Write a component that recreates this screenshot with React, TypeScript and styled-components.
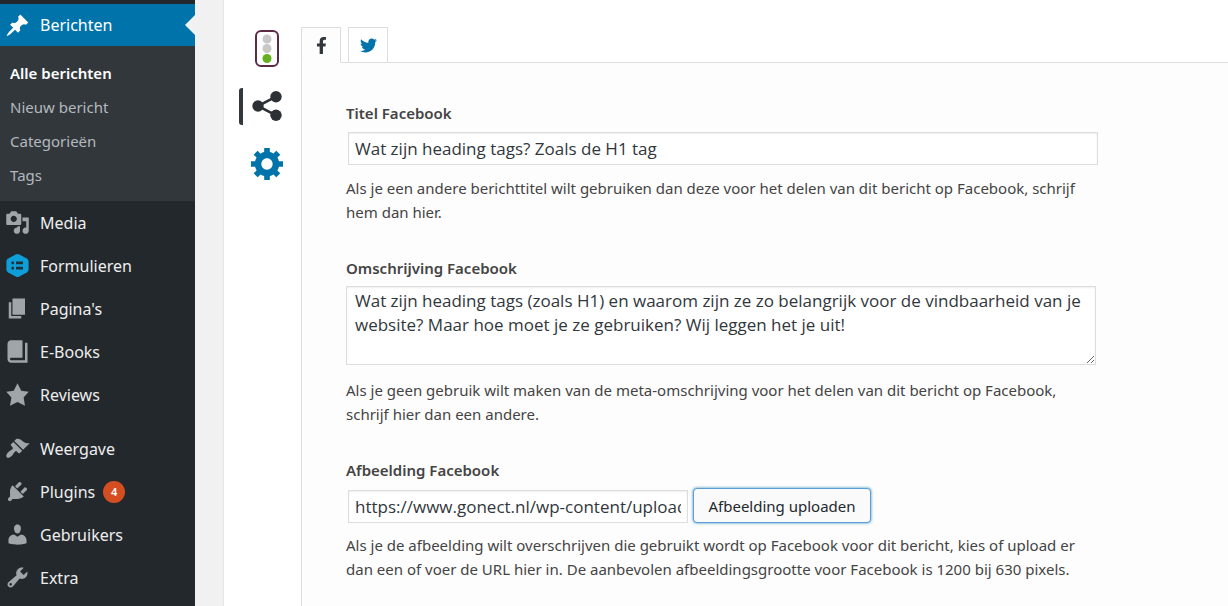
import React from "react";
import styled, { createGlobalStyle } from "styled-components";
import { FaFacebookF, FaTwitter } from "react-icons/fa";

const GlobalStyle = createGlobalStyle`
  *, *::before, *::after { box-sizing: border-box; }
  body {
    margin: 0;
    background: #f1f1f1;
    color: #444;
    font-family: "Noto Sans", "Open Sans", sans-serif;
    font-size: 15px;
    line-height: 24px;
  }
  ul { list-style: none; margin: 0; padding: 0; }
  a { color: inherit; text-decoration: none; }
`;

const Page = styled.div`
  display: flex;
  min-height: 100vh;
`;

const Sidebar = styled.nav`
  flex: 0 0 195px;
  padding-top: 4px;
  background: #23282d;
  color: #eee;
`;

const MenuLink = styled.a<{ $current?: boolean }>`
  position: relative;
  display: flex;
  align-items: center;
  gap: 10px;
  height: ${(p) => (p.$current ? 42 : 43)}px;
  padding-left: 5px;
  font-size: 16px;
  color: ${(p) => (p.$current ? "#fff" : "#eee")};
  background: ${(p) => (p.$current ? "#0073aa" : "transparent")};

  svg { flex: none; width: 25px; height: 25px; fill: ${(p) => (p.$current ? "#fff" : "#a0a5aa")}; }
`;

const CurrentArrow = styled.span`
  position: absolute;
  right: 0;
  border: 10px solid transparent;
  border-right-color: #f1f1f1;
  border-left-width: 0;
`;

const MenuGroup = styled.ul`
  & + & { margin-top: 11px; }
`;

const SubMenu = styled.ul`
  padding: 10px 0 9px;
  background: #32373c;
`;

const SubLink = styled.a<{ $current?: boolean }>`
  display: block;
  padding: 0 10px;
  line-height: 34px;
  color: ${(p) => (p.$current ? "#fff" : "#b4b9be")};
  font-weight: ${(p) => (p.$current ? 600 : 400)};
`;

const Badge = styled.span`
  width: 22px;
  height: 22px;
  margin-left: -2px;
  border-radius: 11px;
  background: #d54e21;
  color: #fff;
  font-size: 11px;
  font-weight: 600;
  line-height: 22px;
  text-align: center;
`;

const MetaBox = styled.main`
  flex: 1;
  min-width: 0;
  display: flex;
  margin-left: 28px;
  border-left: 1px solid #e5e5e5;
  background: #fff;
`;

const SectionNav = styled.nav`
  flex: 0 0 77px;
  display: flex;
  flex-direction: column;
  gap: 21px;
  padding: 30px 10px 0 15px;
`;

const SectionButton = styled.button<{ $active?: boolean }>`
  display: flex;
  align-items: center;
  justify-content: center;
  height: 37px;
  padding: 0;
  border: 0;
  border-left: 4px solid ${(p) => (p.$active ? "#32373c" : "transparent")};
  border-radius: 3px 0 0 3px;
  background: none;
`;

const Content = styled.div`
  flex: 1;
  min-width: 0;
  display: flex;
  flex-direction: column;
  padding-top: 27px;
`;

const Tabs = styled.div`
  display: flex;
  gap: 7px;
`;

const Tab = styled.button<{ $active?: boolean }>`
  z-index: ${(p) => (p.$active ? 1 : 0)};
  display: flex;
  align-items: center;
  justify-content: center;
  width: 40px;
  height: 36px;
  margin-bottom: -1px;
  padding: 0;
  border: 1px solid #ddd;
  border-bottom-color: ${(p) => (p.$active ? "#fdfdfd" : "#ddd")};
  background: ${(p) => (p.$active ? "#fdfdfd" : "#fff")};
  color: ${(p) => (p.$active ? "#32373c" : "#0073aa")};
  font-size: 17px;
`;

const Panel = styled.section`
  flex: 1;
  display: flex;
  flex-direction: column;
  gap: 32px;
  padding: 38px 44px 24px;
  border: solid #ddd;
  border-width: 1px 0 0 1px;
  background: #fdfdfd;
`;

const Field = styled.div`
  max-width: 752px;
`;

const Label = styled.label`
  display: block;
  margin-bottom: 6px;
  font-weight: 600;
`;

const TextInput = styled.input`
  flex: 1;
  min-width: 0;
  height: 33px;
  margin: 1px 0 1px 2px;
  padding: 2px 6px;
  border: 1px solid #ddd;
  background: #fff;
  box-shadow: inset 0 1px 2px rgba(0, 0, 0, 0.07);
  color: #32373c;
  font-family: "Open Sans", "Noto Sans", sans-serif;
  font-size: 17px;
`;

const TextArea = styled.textarea`
  display: block;
  width: calc(100% - 2px);
  height: 79px;
  margin: 0;
  padding: 2px 8px;
  border: 1px solid #ddd;
  background: #fff;
  box-shadow: inset 0 1px 2px rgba(0, 0, 0, 0.07);
  color: #32373c;
  font-family: "Open Sans", "Noto Sans", sans-serif;
  font-size: 17px;
  line-height: 24px;
  resize: vertical;
`;

const Controls = styled.div<{ $short?: boolean }>`
  display: flex;
  align-items: flex-end;
  gap: 5px;
  max-width: ${(p) => (p.$short ? "525px" : "none")};

  ${TextInput} { margin-bottom: ${(p) => (p.$short ? 0 : 1)}px; }
`;

const UploadButton = styled.button`
  flex: none;
  width: 178px;
  height: 35px;
  padding: 0;
  border: 1px solid #5b9dd9;
  border-radius: 4px;
  background: #fafafa;
  box-shadow: 0 0 3px rgba(0, 115, 170, 0.8);
  color: #23282d;
  font: inherit;
`;

const Help = styled.p`
  margin: 10px 0 0;

  ${TextArea} + & { margin-top: 13px; }
`;

const icons = {
  post: "M10.44 3.02l1.82-1.82 6.36 6.35-1.83 1.82c-1.05-.68-2.48-.57-3.41.36l-.75.75c-.92.93-1.04 2.35-.35 3.41l-1.83 1.82-2.41-2.41-2.8 2.79c-.42.42-3.38 2.71-3.8 2.29s1.86-3.39 2.28-3.81l2.79-2.79L4.1 9.36l1.83-1.82c1.05.69 2.48.57 3.4-.36l.75-.75c.93-.92 1.05-2.35.36-3.41z",
  media: "M13 11V4c0-.55-.45-1-1-1h-1.67L9 1H5L3.67 3H2c-.55 0-1 .45-1 1v7c0 .55.45 1 1 1h10c.55 0 1-.45 1-1zM7 4.5c1.38 0 2.5 1.12 2.5 2.5S8.38 9.5 7 9.5 4.5 8.38 4.5 7 5.62 4.5 7 4.5zM14 6h5v10.5c0 1.38-1.12 2.5-2.5 2.5S14 17.88 14 16.5s1.12-2.5 2.5-2.5c.17 0 .34.02.5.05V9h-3V6zm-4 8.05V13h2v3.5c0 1.38-1.12 2.5-2.5 2.5S7 17.88 7 16.5 8.12 14 9.5 14c.17 0 .34.02.5.05z",
  page: "M6 15V2h10v13H6zm-1 1h8v2H3V5h2v11z",
  book: "M16 3h2v16H5c-1.66 0-3-1.34-3-3V4c0-1.66 1.34-3 3-3h9v14H5c-.55 0-1 .45-1 1s.45 1 1 1h11V3z",
  star: "M10 1l3 6 6 .75-4.12 4.62L16 19l-6-3-6 3 1.13-6.63L1 7.75 7 7z",
  appearance: "M14.48 11.06L7.41 3.99l1.5-1.5c.5-.56 2.3-.47 3.51.32 1.21.8 1.43 1.28 2.91 2.1 1.18.64 2.45 1.26 4.45.85zm-.71.71L6.7 4.7 4.93 6.47c-.39.39-.39 1.02 0 1.41l1.06 1.06c.39.39.39 1.03 0 1.42-.6.6-1.43 1.11-2.21 1.69-.35.26-.7.53-1.01.84C1.43 14.23.4 16.08 1.4 17.07c.99 1 2.84-.03 4.18-1.36.31-.31.58-.66.85-1.02.57-.78 1.08-1.61 1.69-2.21.39-.39 1.02-.39 1.41 0l1.06 1.06c.39.39 1.02.39 1.41 0z",
  plugins: "M13.11 4.36L9.87 7.6 8 5.73l3.24-3.24c.35-.34 1.05-.2 1.56.32.52.51.66 1.21.31 1.55zm-8 1.77l.91-1.12 9.01 9.01-1.19.84c-.71.71-2.63 1.16-3.82 1.16H6.14L4.9 17.26c-.59.59-1.54.59-2.12 0-.59-.58-.59-1.53 0-2.12l1.24-1.24v-3.88c0-1.13.4-3.19 1.09-3.89zm7.26 3.97l3.24-3.24c.34-.35 1.04-.21 1.55.31.52.51.66 1.21.31 1.55l-3.24 3.25z",
  users: "M10 9.25c-2.27 0-2.73-3.44-2.73-3.44C7 4.02 7.82 2 9.97 2c2.16 0 2.98 2.02 2.71 3.81 0 0-.41 3.44-2.68 3.44zm0 2.57L12.72 10c2.39 0 4.52 2.33 4.52 4.53v2.49s-3.65 1.13-7.24 1.13c-3.65 0-7.24-1.13-7.24-1.13v-2.49c0-2.25 1.94-4.48 4.47-4.48z",
  tools: "M16.68 9.77c-1.34 1.34-3.3 1.67-4.95.99l-5.41 6.52c-.99.99-2.59.99-3.58 0s-.99-2.59 0-3.57l6.52-5.42c-.68-1.65-.35-3.61.99-4.95 1.28-1.28 3.12-1.62 4.72-1.06l-2.89 2.89 2.82 2.82 2.86-2.87c.53 1.58.18 3.39-1.08 4.65zM3.81 16.21c.4.39 1.04.39 1.43 0 .4-.4.4-1.04 0-1.43-.39-.4-1.03-.4-1.43 0-.39.39-.39 1.03 0 1.43z",
  gear: "M18 12h-2.18c-.17.7-.44 1.35-.81 1.93l1.54 1.54-2.1 2.1-1.54-1.54c-.58.36-1.23.63-1.91.79V19H8v-2.18c-.68-.16-1.33-.43-1.91-.79l-1.54 1.54-2.12-2.12 1.54-1.54c-.36-.58-.63-1.23-.79-1.91H1V9.03h2.17c.16-.7.44-1.35.8-1.94L2.43 5.55l2.1-2.1 1.54 1.54c.58-.37 1.24-.64 1.93-.81V2h3v2.18c.68.16 1.33.43 1.91.79l1.54-1.54 2.12 2.12-1.54 1.54c.36.59.64 1.24.8 1.94H18V12zm-8.5 1.5c1.66 0 3-1.34 3-3s-1.34-3-3-3-3 1.34-3 3 1.34 3 3 3z",
};

const Dashicon = ({ path }: { path: string }) => (
  <svg viewBox="0 0 20 20" aria-hidden="true"><path d={path} /></svg>
);

const FormsIcon = () => (
  <svg viewBox="0 0 25 25" aria-hidden="true">
    <path
      d="M10.6 1.6Q12.5.6 14.4 1.6L21.8 5.6Q23.6 6.6 23.6 8.6V16.4Q23.6 18.4 21.8 19.4L14.4 23.4Q12.5 24.4 10.6 23.4L3.2 19.4Q1.4 18.4 1.4 16.4V8.6Q1.4 6.6 3.2 5.6Z"
      fill="#0e9fd8"
    />
    <path d="M6.5 8.6h2.4v2.6H6.5zM11 8.6h7v2.6h-7zM6.5 13.8h2.4v2.6H6.5zM11 13.8h7v2.6h-7z" fill="#20303a" />
  </svg>
);

const TrafficLight = () => (
  <svg width="24" height="37" viewBox="0 0 24 37" aria-hidden="true">
    <rect x="1" y="1" width="22" height="35" rx="5" fill="#fff" stroke="#5d2a46" strokeWidth="2" />
    <circle cx="12" cy="9" r="4.5" fill="#c8c8c8" />
    <circle cx="12" cy="18.5" r="4.5" fill="#c8c8c8" />
    <circle cx="12" cy="28.5" r="4.5" fill="#64b01e" />
  </svg>
);

const ShareIcon = () => (
  <svg width="30" height="32" viewBox="0 0 30 32" aria-hidden="true">
    <path d="M24 5.7L6 15l18 9.3" fill="none" stroke="#2d3136" strokeWidth="2.6" />
    <g fill="#2d3136">
      <circle cx="6" cy="15" r="5.7" />
      <circle cx="24" cy="5.7" r="5.7" />
      <circle cx="24" cy="24.3" r="5.7" />
    </g>
  </svg>
);

const GearIcon = () => (
  <svg width="32" height="34" viewBox="1 2 17 17" preserveAspectRatio="xMidYMin" aria-hidden="true">
    <path d={icons.gear} fill="#0073aa" />
  </svg>
);

const MenuItem = ({ icon, text, count }: { icon: React.ReactNode; text: string; count?: number }) => (
  <li>
    <MenuLink href="#">
      {icon}
      {text}
      {count !== undefined && <Badge>{count}</Badge>}
    </MenuLink>
  </li>
);

export default function App() {
  return (
    <>
      <GlobalStyle />
      <Page>
        <Sidebar>
          <MenuLink href="#" $current>
            <Dashicon path={icons.post} />
            Berichten
            <CurrentArrow />
          </MenuLink>
          <SubMenu>
            <li><SubLink href="#" $current>Alle berichten</SubLink></li>
            <li><SubLink href="#">Nieuw bericht</SubLink></li>
            <li><SubLink href="#">Categorieën</SubLink></li>
            <li><SubLink href="#">Tags</SubLink></li>
          </SubMenu>
          <MenuGroup>
            <MenuItem icon={<Dashicon path={icons.media} />} text="Media" />
            <MenuItem icon={<FormsIcon />} text="Formulieren" />
            <MenuItem icon={<Dashicon path={icons.page} />} text="Pagina's" />
            <MenuItem icon={<Dashicon path={icons.book} />} text="E-Books" />
            <MenuItem icon={<Dashicon path={icons.star} />} text="Reviews" />
          </MenuGroup>
          <MenuGroup>
            <MenuItem icon={<Dashicon path={icons.appearance} />} text="Weergave" />
            <MenuItem icon={<Dashicon path={icons.plugins} />} text="Plugins" count={4} />
            <MenuItem icon={<Dashicon path={icons.users} />} text="Gebruikers" />
            <MenuItem icon={<Dashicon path={icons.tools} />} text="Extra" />
          </MenuGroup>
        </Sidebar>
        <MetaBox>
          <SectionNav>
            <SectionButton type="button" aria-label="SEO"><TrafficLight /></SectionButton>
            <SectionButton type="button" aria-label="Social" $active><ShareIcon /></SectionButton>
            <SectionButton type="button" aria-label="Instellingen"><GearIcon /></SectionButton>
          </SectionNav>
          <Content>
            <Tabs role="tablist">
              <Tab type="button" role="tab" aria-selected="true" aria-label="Facebook" $active><FaFacebookF /></Tab>
              <Tab type="button" role="tab" aria-selected="false" aria-label="Twitter"><FaTwitter /></Tab>
            </Tabs>
            <Panel>
              <Field>
                <Label htmlFor="fb-title">Titel Facebook</Label>
                <Controls>
                  <TextInput id="fb-title" type="text" defaultValue="Wat zijn heading tags? Zoals de H1 tag" />
                </Controls>
                <Help>
                  Als je een andere berichttitel wilt gebruiken dan deze voor het delen van dit bericht op Facebook, schrijf
                  hem dan hier.
                </Help>
              </Field>
              <Field>
                <Label htmlFor="fb-description">Omschrijving Facebook</Label>
                <TextArea
                  id="fb-description"
                  defaultValue="Wat zijn heading tags (zoals H1) en waarom zijn ze zo belangrijk voor de vindbaarheid van je website? Maar hoe moet je ze gebruiken? Wij leggen het je uit!"
                />
                <Help>
                  Als je geen gebruik wilt maken van de meta-omschrijving voor het delen van dit bericht op Facebook,
                  schrijf hier dan een andere.
                </Help>
              </Field>
              <Field>
                <Label htmlFor="fb-image">Afbeelding Facebook</Label>
                <Controls $short>
                  <TextInput
                    id="fb-image"
                    type="text"
                    defaultValue="https://www.gonect.nl/wp-content/uploads/2018/01/heading-tags.png"
                  />
                  <UploadButton type="button">Afbeelding uploaden</UploadButton>
                </Controls>
                <Help>
                  Als je de afbeelding wilt overschrijven die gebruikt wordt op Facebook voor dit bericht, kies of upload er
                  dan een of voer de URL hier in. De aanbevolen afbeeldingsgrootte voor Facebook is 1200 bij 630 pixels.
                </Help>
              </Field>
            </Panel>
          </Content>
        </MetaBox>
      </Page>
    </>
  );
}
